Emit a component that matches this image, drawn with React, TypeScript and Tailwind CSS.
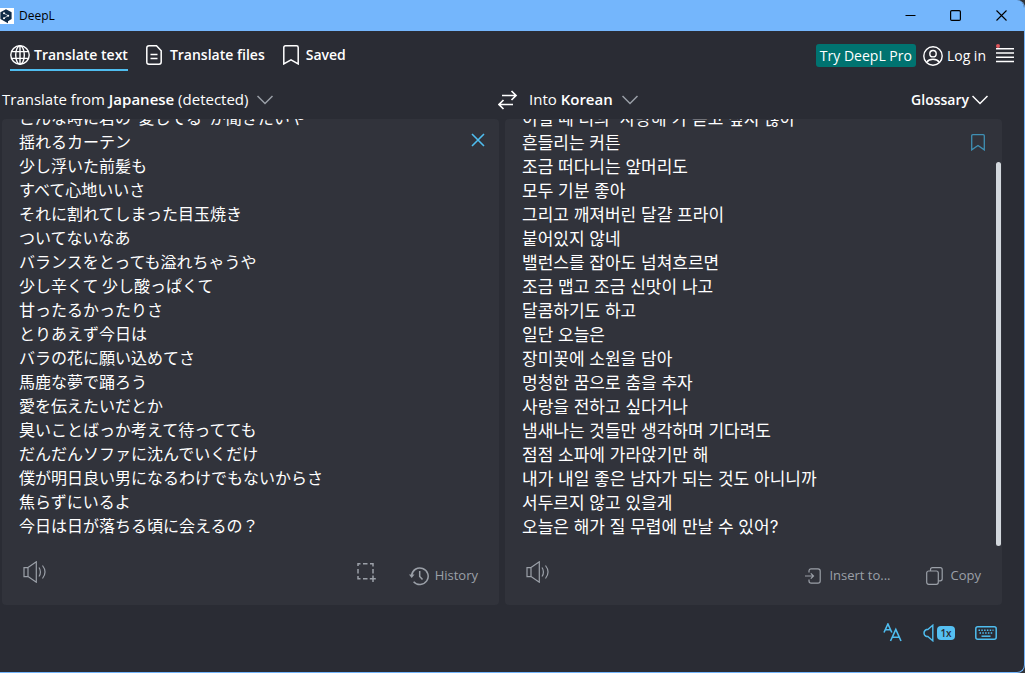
import type { ReactNode } from 'react';

const SOURCE_LINES = [
    'こんな時に君の"愛してる"が聞きたいや',
    '揺れるカーテン',
    '少し浮いた前髪も',
    'すべて心地いいさ',
    'それに割れてしまった目玉焼き',
    'ついてないなあ',
    'バランスをとっても溢れちゃうや',
    '少し辛くて 少し酸っぱくて',
    '甘ったるかったりさ',
    'とりあえず今日は',
    'バラの花に願い込めてさ',
    '馬鹿な夢で踊ろう',
    '愛を伝えたいだとか',
    '臭いことばっか考えて待ってても',
    'だんだんソファに沈んでいくだけ',
    '僕が明日良い男になるわけでもないからさ',
    '焦らずにいるよ',
    '今日は日が落ちる頃に会えるの？',
];

const TARGET_LINES = [
    "이럴 때 너의 '사랑해'가 듣고 싶지 않아",
    '흔들리는 커튼',
    '조금 떠다니는 앞머리도',
    '모두 기분 좋아',
    '그리고 깨져버린 달걀 프라이',
    '붙어있지 않네',
    '밸런스를 잡아도 넘쳐흐르면',
    '조금 맵고 조금 신맛이 나고',
    '달콤하기도 하고',
    '일단 오늘은',
    '장미꽃에 소원을 담아',
    '멍청한 꿈으로 춤을 추자',
    '사랑을 전하고 싶다거나',
    '냄새나는 것들만 생각하며 기다려도',
    '점점 소파에 가라앉기만 해',
    '내가 내일 좋은 남자가 되는 것도 아니니까',
    '서두르지 않고 있을게',
    '오늘은 해가 질 무렵에 만날 수 있어?',
];

type IconProps = { w: number; h: number; stroke?: number; className?: string; children: ReactNode };

const Icon: React.FC<IconProps> = ({ w, h, stroke = 1.5, className, children }) => (
    <svg
        width={w}
        height={h}
        viewBox={`0 0 ${w} ${h}`}
        fill="none"
        stroke="currentColor"
        strokeWidth={stroke}
        className={`shrink-0 ${className ?? ''}`}
        aria-hidden="true"
    >
        {children}
    </svg>
);

const Chevron: React.FC<{ className?: string }> = ({ className }) => (
    <Icon w={16} h={10} className={className}>
        <path d="M.5 1 8 8.5 15.5 1" />
    </Icon>
);

const Speaker = () => (
    <Icon w={24} h={22} stroke={1.2}>
        <path d="M1 6.6h4v9H1zM5 6.6 13.3.8v20.4L5 15.600" />
        <path d="M16 6.500c1.900 2.500 1.900 6.500 0 9M19.500 4.500c3.100 4 3.100 9 0 13" />
    </Icon>
);

const TitleBar = () => (
    <header className="flex h-[31px] items-center bg-[#74b6fc] text-black">
        <svg width="14" height="16" viewBox="0 0 14 16" className="mr-[5px] shrink-0" aria-hidden="true">
            <path d="M0 0h14v16H0z" fill="#fff" />
            <path d="M6 1.200 11.600 4.300v6.800L8 13.200v2L5.300 13.700.4 11V4.300z" fill="#0f2b46" />
            <path d="M4 5.300 8.200 7.700 4 10.200" fill="none" stroke="#b9c6d2" strokeWidth=".9" />
            <circle cx="4" cy="5.300" r="1" fill="#fff" />
            <circle cx="8.200" cy="7.700" r="1" fill="#fff" />
            <circle cx="4" cy="10.200" r="1" fill="#fff" />
        </svg>
        <span className="text-xs">DeepL</span>
        <div className="ml-auto flex h-full">
            <button aria-label="Minimize" className="flex w-[45px] items-center justify-center">
                <Icon w={11} h={11} stroke={1}><path d="M.5 5.500h10" /></Icon>
            </button>
            <button aria-label="Maximize" className="flex w-[45px] items-center justify-center">
                <Icon w={11} h={11} stroke={1.2}><rect x=".6" y=".6" width="9.800" height="9.800" rx="1.200" /></Icon>
            </button>
            <button aria-label="Close" className="flex w-[46px] items-center justify-center">
                <Icon w={11} h={11} stroke={1.1}><path d="m.5.5 10 10M10.500.5l-10 10" /></Icon>
            </button>
        </div>
    </header>
);

const NavBar = () => (
    <div className="flex h-[49px] items-center justify-between px-2.5">
        <nav className="flex h-full items-start gap-[18px] pt-3.5 text-sm/5 font-semibold">
            <a href="#text" className="flex items-center gap-1 border-b-2 border-[#4fbdef] pb-1">
                <Icon w={20} h={20} stroke={1.4}>
                    <circle cx="10" cy="10" r="9.200" />
                    <ellipse cx="10" cy="10" rx="4.300" ry="9.200" />
                    <path d="M10 1v18M1.800 6.600h16.400M1.800 13.400h16.400" />
                </Icon>
                Translate text
            </a>
            <a href="#files" className="flex items-center gap-2">
                <Icon w={16} h={20}>
                    <path d="M3 .8h7.500l4.700 5V17q0 2.200-2.200 2.200H3Q.8 19.200.8 17V3Q.8.8 3 .8z" />
                    <path d="M4.500 9.500h7M4.500 13.500h7" />
                </Icon>
                Translate files
            </a>
            <a href="#saved" className="flex items-center gap-[7px]">
                <Icon w={16} h={20}>
                    <path d="M2.500.8h11q1.700 0 1.700 1.700v16.400L8 14.800.8 18.900V2.500Q.8.8 2.500.8z" />
                </Icon>
                Saved
            </a>
        </nav>
        <div className="flex items-center text-sm">
            <button className="h-[23px] rounded-[3px] bg-[#007370] px-1">Try DeepL Pro</button>
            <a href="#login" className="ml-[7px] flex items-center gap-1">
                <Icon w={20} h={20} stroke={1.4}>
                    <circle cx="10" cy="10" r="9.200" />
                    <circle cx="10" cy="7.700" r="3.200" />
                    <path d="M3.600 16.300c1.400-2 3.400-3 6.400-3s5 1 6.400 3" />
                </Icon>
                Log in
            </a>
            <button aria-label="Menu" className="ml-2.5">
                <Icon w={18} h={23}>
                    <path d="M0 4.700h18M0 9h18M0 13.300h18M0 17.600h18" />
                    <circle cx="2" cy="2" r="2" fill="#e0565b" stroke="none" />
                </Icon>
            </button>
        </div>
    </div>
);

const LanguageBar = () => (
    <div className="grid h-[39px] grid-cols-2 items-center pr-9 pl-0.5 text-[15px]">
        <button className="flex items-center gap-[9px]">
            <span>Translate from <b className="font-semibold">Japanese</b> (detected)</span>
            <Chevron className="text-[#9ba0a8]" />
        </button>
        <div className="flex items-center">
            <button aria-label="Swap languages" className="mr-[11px] pl-[3px]">
                <Icon w={20} h={20} stroke={1.7}>
                    <path d="M4 5.500h14M13.500 1l4.500 4.500-4.500 4.500M15 14.500H1M5.500 10 1 14.500 5.500 19" />
                </Icon>
            </button>
            <button className="flex items-center gap-[9px]">
                <span>Into <b className="font-semibold">Korean</b></span>
                <Chevron className="text-[#9ba0a8]" />
            </button>
            <button className="ml-auto flex items-center gap-[3px] text-sm font-semibold">
                Glossary
                <Chevron />
            </button>
        </div>
    </div>
);

const SourcePanel = () => (
    <section className="flex flex-col rounded bg-[#31333b]">
        <div className="flex h-[427px] items-start overflow-hidden pr-3.5 pl-[17px]">
            <div className="flex h-full grow flex-col justify-end overflow-hidden pb-[9px]">
                <textarea
                    aria-label="Source text"
                    rows={SOURCE_LINES.length}
                    defaultValue={SOURCE_LINES.join('\n')}
                    className="block shrink-0 resize-none overflow-hidden font-['Noto_Sans_CJK_JP',sans-serif] text-base/6 outline-none"
                />
            </div>
            <button aria-label="Clear text" className="mt-3.5 text-[#4fbdef]">
                <Icon w={14} h={14} stroke={1.6}><path d="m1 1 12 12M13 1 1 13" /></Icon>
            </button>
        </div>
        <div className="flex h-[59px] items-start pt-[15px] pr-[21px] pl-[21px] text-[13px] text-[#9ba0a8]">
            <button aria-label="Listen to source"><Speaker /></button>
            <button aria-label="Capture text from screen" className="mr-[33px] ml-auto">
                <Icon w={19} h={22}>
                    <path d="M1 5V2.800h2.500M6 2.800h4.500M13 2.800h3V5.500M16 8v4.500M1 8v4.500M1 15v2.800h2.500M6 17.800h4.500M16 14.500v6.500M12.800 17.800h6" />
                </Icon>
            </button>
            <button className="flex h-[30px] items-center gap-1.5">
                <Icon w={20} h={20}>
                    <path d="M2.600 9.500a8.300 8.300 0 1 1 2 6.200M10.700 5v5.500l2.800 3" />
                    <path d="M0 8.500h5.500l-2.800 3.500z" fill="currentColor" stroke="none" />
                </Icon>
                History
            </button>
        </div>
    </section>
);

const TargetPanel = () => (
    <section className="flex flex-col rounded bg-[#31333b]">
        <div className="flex h-[427px] items-start overflow-hidden pr-px pl-[17px]">
            <div className="flex h-full grow flex-col justify-end overflow-hidden pb-[7px]">
                <textarea
                    aria-label="Translation"
                    readOnly
                    rows={TARGET_LINES.length}
                    defaultValue={TARGET_LINES.join('\n')}
                    className="block shrink-0 resize-none overflow-hidden font-[Inter,'Noto_Sans_CJK_KR',sans-serif] text-[17px]/6 outline-none"
                />
            </div>
            <button aria-label="Save translation" className="mt-[15px] mr-[11px] text-[#3f8fb3]">
                <Icon w={14} h={17} stroke={1.3}>
                    <path d="M1.800.7h10.400q1.100 0 1.100 1.100v14.100L7 11.500.7 15.900V1.800Q.7.7 1.800.7z" />
                </Icon>
            </button>
            <div className="h-[384px] w-[5px] shrink-0 self-end rounded-full bg-[#d3d8dd]" />
        </div>
        <div className="flex h-[59px] items-start pt-[15px] pr-[21px] pl-[21px] text-[13px] text-[#9ba0a8]">
            <button aria-label="Listen to translation"><Speaker /></button>
            <button className="mr-[35px] ml-auto flex h-[30px] items-center gap-2">
                <Icon w={16} h={16} stroke={1.2}>
                    <path d="M4 4.500V3Q4 .8 6.200.8H13q2.200 0 2.200 2.200v10q0 2.200-2.200 2.200H6.200Q4 15.200 4 13v-1.500M0 8h8.500M5.800 5.300 8.500 8l-2.700 2.700" />
                </Icon>
                Insert to...
            </button>
            <button className="flex h-[30px] items-center gap-2">
                <Icon w={17} h={18} stroke={1.2}>
                    <rect x=".7" y="4" width="11.600" height="13.300" rx="2" />
                    <path d="M4.500 4V2.700q0-2 2-2h7.700q2 0 2 2v9.100q0 2-2 2h-1.900" />
                </Icon>
                Copy
            </button>
        </div>
    </section>
);

const ToolBar = () => (
    <footer className="flex items-center justify-end gap-5 pt-[18px] pr-[27px] text-[#4fbdef]">
        <button aria-label="Text size">
            <Icon w={20} h={20} stroke={1.6}>
                <path d="M1 9.500 4.900 1 8.800 9.500M2.300 6.800h5.200M7.500 18 12.800 6.500 18 18M9.300 14.200h7" />
            </Icon>
        </button>
        <button aria-label="Playback speed 1x" className="flex items-center gap-[3px]">
            <Icon w={11} h={18} stroke={1.4}>
                <path d="M9.800 1.200v15.600L4.800 12.500H3.500Q1 11.500 1 9t2.500-3.500h1.300z" />
            </Icon>
            <span className="flex h-3.5 w-[18px] items-center justify-center rounded bg-[#55c0f2] text-[10px] font-semibold text-[#2a2c34]">1x</span>
        </button>
        <button aria-label="Keyboard shortcuts">
            <Icon w={22} h={14}>
                <rect x=".8" y=".8" width="20.400" height="12.400" rx="2" />
                <path d="M3.500 4.300h15M4.500 7h13" strokeDasharray="1.500 1.300" />
                <path d="M6.500 10.200h9" />
            </Icon>
        </button>
    </footer>
);

const App: React.FC = () => (
    <div className="min-h-screen bg-[#30343a] font-['Open_Sans','Noto_Sans',sans-serif]">
        <div className="flex min-h-screen flex-col overflow-hidden rounded-r-lg border-r border-b border-[#74b6fc] bg-[#2a2c34] text-white">
            <TitleBar />
            <NavBar />
            <main>
                <LanguageBar />
                <div className="grid grid-cols-2 gap-1.5 pr-[22px] pl-0.5">
                    <SourcePanel />
                    <TargetPanel />
                </div>
            </main>
            <ToolBar />
        </div>
    </div>
);

export default App;
